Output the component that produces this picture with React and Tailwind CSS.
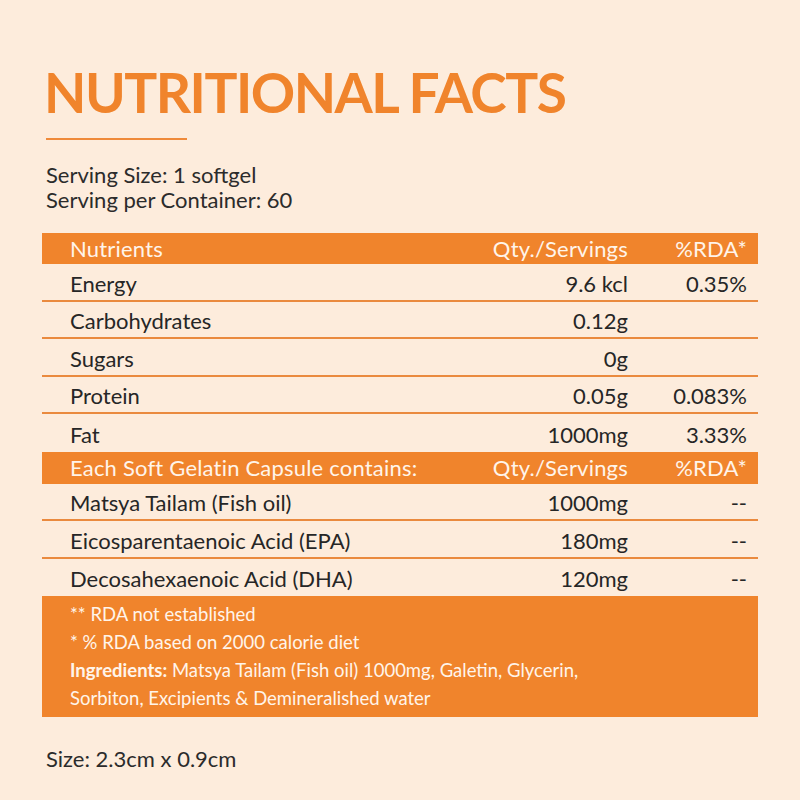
const nutrients = [
  { name: "Energy", qty: "9.6 kcl", rda: "0.35%" },
  { name: "Carbohydrates", qty: "0.12g", rda: "" },
  { name: "Sugars", qty: "0g", rda: "" },
  { name: "Protein", qty: "0.05g", rda: "0.083%" },
  { name: "Fat", qty: "1000mg", rda: "3.33%", last: true },
];

const capsule = [
  { name: "Matsya Tailam (Fish oil)", qty: "1000mg", rda: "--" },
  { name: "Eicosparentaenoic Acid (EPA)", qty: "180mg", rda: "--" },
  { name: "Decosahexaenoic Acid (DHA)", qty: "120mg", rda: "--", last: true },
];

const HeaderRow = ({ label, h }) => (
  <div className={`flex items-center ${h} bg-[#f0842c] pl-[28px] pr-[11px] text-[22px] tracking-[0.2px] text-[#fff4ea]`}>
    <div className="flex-1">{label}</div>
    <div className="text-right">Qty./Servings</div>
    <div className="w-[119px] text-right">%RDA*</div>
  </div>
);

const Row = ({ item }) => (
  <div className={`flex items-center h-[37.5px] pt-[3px] pl-[28px] pr-[11px] text-[22px] text-[#262626] ${item.last ? "" : "border-b-2 border-[#ea8a3e]"}`}>
    <div className="flex-1">{item.name}</div>
    <div className="text-right">{item.qty}</div>
    <div className="w-[119px] text-right">{item.rda}</div>
  </div>
);

const App = () => {
  return (
    <div className="w-[800px] h-[800px] bg-[#fdecdc] overflow-hidden" style={{ fontFamily: "Lato, 'Liberation Sans', sans-serif" }}>
      <div className="pt-[60px] px-[44px]">
        <h1 className="text-[55px] font-bold leading-[64px] text-[#f0842c] tracking-[-1.5px]">NUTRITIONAL FACTS</h1>
        <div className="mt-[14px] ml-[2px] w-[141px] h-[2px] bg-[#ef8a3a]"></div>
        <div className="mt-[22px] ml-[2px] text-[22px] leading-[25px] text-[#2b2b2b]">
          <p>Serving Size: 1 softgel</p>
          <p>Serving per Container: 60</p>
        </div>
      </div>

      <div className="mt-[21px] mx-[42px]">
        <HeaderRow label="Nutrients" h="h-[31px]" />
        {nutrients.map((item) => (
          <Row key={item.name} item={item} />
        ))}
        <HeaderRow label="Each Soft Gelatin Capsule contains:" h="h-[32px]" />
        {capsule.map((item) => (
          <Row key={item.name} item={item} />
        ))}
        <div className="bg-[#f0842c] pl-[28px] pt-[4px] pb-[5px] text-[18.5px] leading-[28px] text-[#fff4ea]">
          <p>** RDA not established</p>
          <p>* % RDA based on 2000 calorie diet</p>
          <p>
            <span className="font-bold">Ingredients:</span> Matsya Tailam (Fish oil) 1000mg, Galetin, Glycerin,
          </p>
          <p>Sorbiton, Excipients &amp; Demineralished water</p>
        </div>
      </div>

      <p className="mt-[29px] ml-[46px] text-[22px] leading-[25px] text-[#2b2b2b]">Size: 2.3cm x 0.9cm</p>
    </div>
  );
};

export default App;
